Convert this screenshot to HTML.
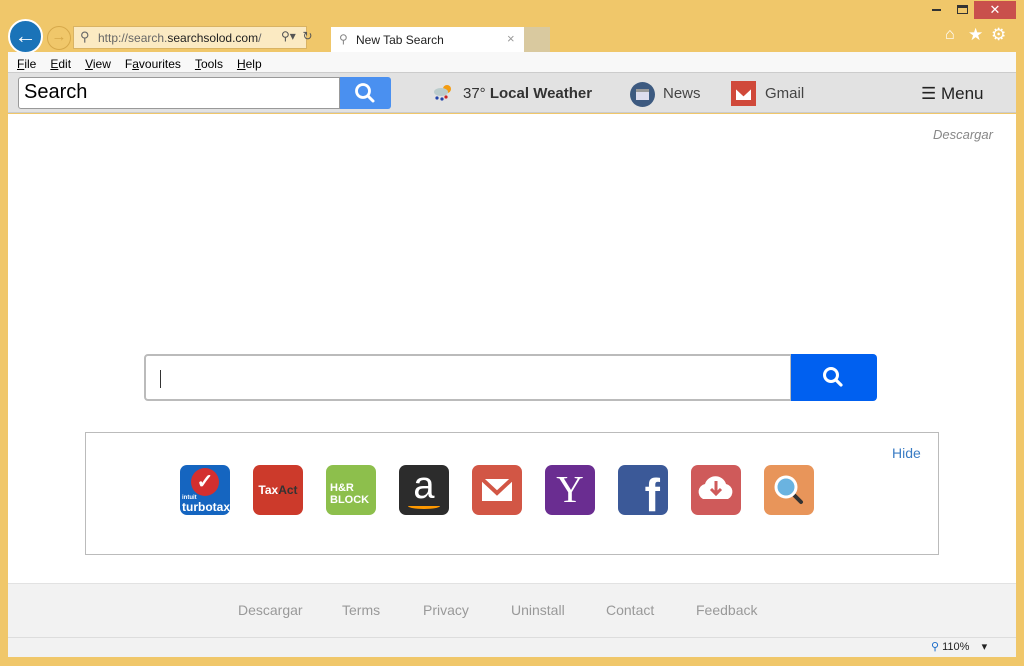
<!DOCTYPE html>
<html><head><meta charset="utf-8"><style>
*{margin:0;padding:0;box-sizing:border-box}
body{width:1024px;height:666px;background:#f0c76a;font-family:"Liberation Sans",sans-serif;position:relative;overflow:hidden}
.abs{position:absolute}
.menu span{margin-right:14px;font-size:12px;color:#000}
.menu u{text-decoration:underline}
.ic{position:absolute;top:465px;width:50px;height:50px;border-radius:7px;overflow:hidden;color:#fff;font-weight:bold}
.foot a{color:#999;text-decoration:none;font-size:14px;position:absolute;top:602px}
</style></head><body>
<div class="abs" style="left:932px;top:9px;width:9px;height:2px;background:#333"></div>
<div class="abs" style="left:957px;top:5px;width:11px;height:9px;border:1.5px solid #333;border-top-width:3px"></div>
<div class="abs" style="left:974px;top:1px;width:42px;height:18px;background:#c9504c;color:#fff;text-align:center;font-size:13px;line-height:18px">&#10005;</div>
<div class="abs" style="left:945px;top:26px;font-size:16px;color:#fff">&#8962;</div>
<div class="abs" style="left:968px;top:25px;font-size:17px;color:#fff">&#9733;</div>
<div class="abs" style="left:991px;top:25px;font-size:17px;color:#fff">&#9881;</div>
<div class="abs" style="left:8px;top:19px;width:35px;height:35px;border-radius:50%;background:#1a73b8;border:2px solid #fff;color:#fff;font-size:22px;text-align:center;line-height:30px;font-weight:bold">&#8592;</div>
<div class="abs" style="left:47px;top:26px;width:24px;height:24px;border-radius:50%;border:1.5px solid #d6a84a;color:#d6a84a;font-size:15px;text-align:center;line-height:20px;font-weight:bold">&#8594;</div>
<div class="abs" style="left:73px;top:26px;width:234px;height:23px;background:#fbeac2;border:1px solid #d9b363"></div>
<div class="abs" style="left:80px;top:29px;font-size:13px;color:#666">&#9906;</div>
<div class="abs" style="left:98px;top:31px;font-size:12px;color:#666">http://search.<span style="color:#222">searchsolod.com</span>/</div>
<div class="abs" style="left:281px;top:29px;font-size:12px;color:#555">&#9906;&#9662; &nbsp;&#8635;</div>
<div class="abs" style="left:331px;top:27px;width:193px;height:25px;background:#fff"></div>
<div class="abs" style="left:339px;top:32px;font-size:12px;color:#888">&#9906;</div>
<div class="abs" style="left:356px;top:33px;font-size:12px;color:#222">New Tab Search</div>
<div class="abs" style="left:507px;top:31px;font-size:13px;color:#999">&#215;</div>
<div class="abs" style="left:524px;top:27px;width:26px;height:25px;background:#d9c99f"></div>
<div class="abs menu" style="left:8px;top:52px;width:1008px;height:21px;background:#f8f8f8;border-bottom:1px solid #ccc;padding:3px 0 0 9px">
<span><u>F</u>ile</span><span><u>E</u>dit</span><span><u>V</u>iew</span><span>F<u>a</u>vourites</span><span><u>T</u>ools</span><span><u>H</u>elp</span></div>
<div class="abs" style="left:8px;top:73px;width:1008px;height:40px;background:#e2e2e2;border-bottom:1px solid #ccc"></div>
<div class="abs" style="left:18px;top:77px;width:322px;height:32px;background:#fff;border:1px solid #999;border-radius:3px 0 0 3px;font-size:20px;padding:3px 5px;color:#000">Search</div>
<div class="abs" style="left:340px;top:77px;width:51px;height:32px;background:#4a90f0;border-radius:0 3px 3px 0"><svg width="51" height="32"><circle cx="23" cy="14" r="6.5" fill="none" stroke="#fff" stroke-width="2.8"/><line x1="28" y1="19" x2="33" y2="24" stroke="#fff" stroke-width="3" stroke-linecap="round"/></svg></div>
<svg class="abs" style="left:432px;top:83px" width="22" height="20"><circle cx="15" cy="6" r="4" fill="#f39c12"/><ellipse cx="9" cy="9" rx="7" ry="4" fill="#bcc"/><circle cx="5" cy="15" r="1.6" fill="#2244aa"/><circle cx="10" cy="16" r="1.6" fill="#2244aa"/><circle cx="14" cy="14" r="1.6" fill="#c22"/></svg>
<div class="abs" style="left:463px;top:85px;font-size:15px;color:#333">37° <b>Local Weather</b></div>
<div class="abs" style="left:630px;top:82px;width:25px;height:25px;border-radius:50%;background:#3d5a80"><div style="margin:7px 6px;width:13px;height:11px;background:#dde;border-top:3px solid #999"></div></div>
<div class="abs" style="left:663px;top:85px;font-size:15px;color:#444">News</div>
<div class="abs" style="left:731px;top:81px;width:25px;height:25px;background:#d0493a"><svg width="25" height="25"><path d="M5 7 L12.5 14 L20 7 V19 H5 Z" fill="#fff"/><path d="M5 7 L12.5 14 L20 7" stroke="#d0493a" stroke-width="2" fill="none"/></svg></div>
<div class="abs" style="left:765px;top:85px;font-size:15px;color:#444">Gmail</div>
<div class="abs" style="left:921px;top:84px;font-size:17px;color:#222">&#9776; Menu</div>
<div class="abs" style="left:8px;top:114px;width:1008px;height:469px;background:#fff"></div>
<div class="abs" style="left:933px;top:127px;font-size:13px;color:#888;font-style:italic">Descargar</div>
<div class="abs" style="left:144px;top:354px;width:648px;height:47px;border:2px solid #bbb;border-radius:4px 0 0 4px;background:#fff"><div style="margin:14px 0 0 14px;width:1px;height:18px;background:#333"></div></div>
<div class="abs" style="left:791px;top:354px;width:86px;height:47px;background:#0060f0;border-radius:0 4px 4px 0"><svg width="86" height="47"><circle cx="40" cy="21" r="6.5" fill="none" stroke="#fff" stroke-width="3"/><line x1="45" y1="26" x2="50" y2="31" stroke="#fff" stroke-width="3.2" stroke-linecap="round"/></svg></div>
<div class="abs" style="left:85px;top:432px;width:854px;height:123px;border:1px solid #bbb;background:#fff"></div>
<div class="abs" style="left:892px;top:445px;font-size:14px;color:#3a7cc4">Hide</div>
<div class="ic" style="left:180px;background:#1565c0"><div style="position:absolute;left:11px;top:3px;width:28px;height:28px;border-radius:50%;background:#d32f2f;color:#fff;font-size:20px;text-align:center;line-height:28px">&#10003;</div><div style="position:absolute;left:2px;top:30px;font-size:6px">intuit</div><div style="position:absolute;left:2px;top:35px;font-size:12px">turbotax</div></div>
<div class="ic" style="left:253px;background:#cc3a2b;font-size:12px;line-height:50px;text-align:center">Tax<span style="color:#333">Act</span></div>
<div class="ic" style="left:326px;background:#8dbf4c;font-size:11px;padding:17px 0 0 4px;line-height:12px">H&amp;R<br>BLOCK</div>
<div class="ic" style="left:399px;background:#2c2c2c;font-size:38px;text-align:center;line-height:42px;font-weight:normal">a<div style="position:absolute;left:9px;top:38px;width:32px;height:6px;border-bottom:3px solid #f90;border-radius:0 0 50% 50%"></div></div>
<div class="ic" style="left:472px;background:#d25645"><svg width="50" height="50"><rect x="10" y="14" width="30" height="22" fill="#fff"/><path d="M10 14 L25 28 L40 14" stroke="#d25645" stroke-width="4" fill="none"/></svg></div>
<div class="ic" style="left:545px;background:#6a2d91;font-family:'Liberation Serif',serif;font-size:38px;text-align:center;line-height:50px;font-weight:normal">Y</div>
<div class="ic" style="left:618px;background:#3b5998;font-size:46px;text-align:right;padding-right:8px;line-height:60px">f</div>
<div class="ic" style="left:691px;background:#cf5a5a"><svg width="50" height="50"><path d="M12 34 a8 8 0 0 1 2-15 a11 11 0 0 1 21 0 a8 8 0 0 1 2 15 Z" fill="#fff"/><path d="M25 16 V28 M20 24 L25 29 L30 24" stroke="#cf5a5a" stroke-width="3" fill="none"/></svg></div>
<div class="ic" style="left:764px;background:#e8955a"><svg width="50" height="50"><line x1="28" y1="28" x2="37" y2="37" stroke="#333" stroke-width="4" stroke-linecap="round"/><circle cx="22" cy="22" r="10" fill="#6ab3e0" stroke="#fff" stroke-width="3"/></svg></div>
<div class="abs" style="left:8px;top:583px;width:1008px;height:54px;background:#f2f2f2;border-top:1px solid #e2e2e2"></div>
<div class="foot"><a style="left:238px">Descargar</a><a style="left:342px">Terms</a><a style="left:423px">Privacy</a><a style="left:511px">Uninstall</a><a style="left:606px">Contact</a><a style="left:696px">Feedback</a></div>
<div class="abs" style="left:8px;top:637px;width:1008px;height:20px;background:#f2f2f2;border-top:1px solid #ddd"></div>
<div class="abs" style="left:931px;top:640px;font-size:11px;color:#222"><span style="color:#1a6bc8">&#9906;</span> 110% &nbsp;&nbsp; &#9662;</div>
</body></html>
